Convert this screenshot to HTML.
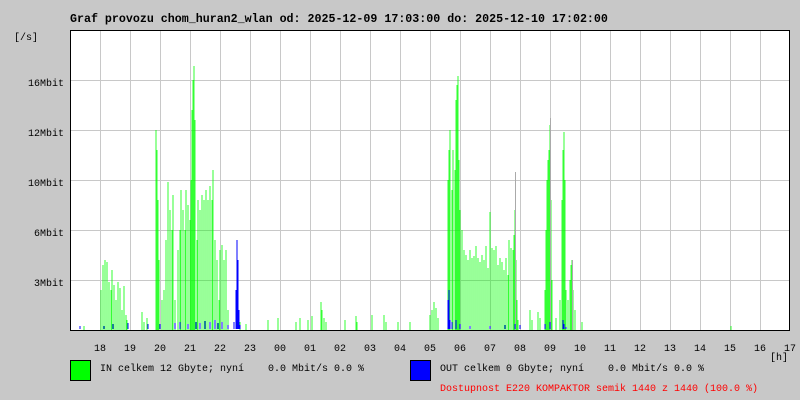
<!DOCTYPE html>
<html><head><style>
body{margin:0;background:#c8c8c8;width:800px;height:400px;overflow:hidden;font-family:"Liberation Mono","DejaVu Sans Mono",monospace;}
text{white-space:pre}
</style></head><body>
<svg width="800" height="400" xmlns="http://www.w3.org/2000/svg" xml:space="preserve" style="position:absolute;left:0;top:0" font-family="Liberation Mono, DejaVu Sans Mono, monospace" font-size="10">
<rect width="800" height="400" fill="#c8c8c8"/>
<rect x="70" y="30" width="720" height="300" fill="#fff"/>
<g stroke="#c8c8c8" stroke-width="1">
<path d="M100.5 30V330M130.5 30V330M160.5 30V330M190.5 30V330M220.5 30V330M250.5 30V330M280.5 30V330M310.5 30V330M340.5 30V330M370.5 30V330M400.5 30V330M430.5 30V330M460.5 30V330M490.5 30V330M520.5 30V330M550.5 30V330M580.5 30V330M610.5 30V330M640.5 30V330M670.5 30V330M700.5 30V330M730.5 30V330M760.5 30V330"/>
<path d="M70 80.5H790M70 130.5H790M70 180.5H790M70 230.5H790M70 280.5H790"/>
</g>
<g stroke="#00ff00" stroke-width="0.8" fill="none">
<path d="M101 330V290M103 330V265M105 330V260M107 330V262M109 330V282M111 330V290M112 330V270M114 330V285M116 330V300M118 330V282M120 330V288M122 330V310M124 330V286M126 330V315M127 330V320M84 330V326M142 330V312M144 330V322M147 330V318"/>
<path d="M156 330V130M157 330V150M158 330V200M159 330V260M162 330V300M164 330V290M166 330V240M168 330V182M170 330V210M172 330V230M173 330V195M175 330V300M178 330V250M180 330V230M181 330V190M183 330V210M185 330V230M186 330V190M188 330V205M190 330V220M191 330V180M192 330V110M193 330V80M194 330V66M195 330V120M197 330V240M198 330V200M200 330V210M202 330V195M204 330V200M206 330V190M208 330V200M210 330V186M212 330V200M213 330V170M215 330V240M217 330V260M219 330V300M220 330V250M222 330V245M224 330V260M226 330V250M228 330V310"/>
<path d="M240 330V322M246 330V324M268 330V320M278 330V318M296 330V322M300 330V318M308 330V320M312 330V316M321 330V302M322 330V310M324 330V318M326 330V322M345 330V320M356 330V316M357 330V322M372 330V315M384 330V315M386 330V322M398 330V322M410 330V322M430 330V315M432 330V310M434 330V302M436 330V308M438 330V318"/>
<path d="M448 330V180M449 330V150M450 330V130M452 330V190M453 330V150M455 330V170M456 330V100M457 330V85M458 330V76M459 330V160M460 330V210M462 330V230M464 330V250M466 330V255M468 330V260M470 330V250M472 330V258M474 330V256M476 330V246M478 330V258M480 330V262M482 330V255M484 330V260M486 330V246M488 330V268M490 330V212M492 330V248M494 330V250M496 330V246M498 330V265M500 330V258M502 330V262M504 330V270M506 330V258M508 330V275M509 330V240M511 330V248M513 330V250M514 330V235M515 330V210M516 330V260M517 330V300M518 330V320"/>
<path d="M530 330V310M532 330V320M538 330V312M540 330V318M545 330V290M546 330V230M547 330V180M548 330V160M549 330V150M550 330V125M551 330V200M552 330V280M556 330V318M560 330V300M562 330V200M563 330V150M564 330V132M565 330V180M566 330V290M568 330V300M570 330V280M571 330V265M572 330V260M573 330V290M575 330V310M582 330V322M731 330V326"/>
</g>
<g stroke="#aaa" stroke-width="1"><path d="M515.5 330V172M550.5 330V118M572.5 330V260"/></g>
<g stroke="#0000ff" stroke-width="1" fill="none">
<path d="M80 329V326M104 329V326M113 329V324M128 329V323M148 329V324M160 329V324M175 329V323M180 329V322M188 329V324M196 329V322M200 329V323M205 329V321M210 329V322M215 329V320M218 329V323M222 329V322M228 329V325M234 329V322M236 329V290M237 329V240M238 329V260M239 329V310M240 329V325"/>
<path d="M448 329V300M449 329V290M450 329V320M452 329V322M456 329V320M460 329V324M470 329V326M490 329V326M505 329V325M515 329V324M520 329V325M545 329V324M550 329V322M563 329V320M564 329V324M566 329V327"/>
</g>
<path d="M70.5 30V330.5H789.5V30.5H70.5" stroke="#000" stroke-width="1" fill="none"/>
<text x="70" y="22" font-weight="bold" font-size="11.65">Graf provozu chom_huran2_wlan od: 2025-12-09 17:03:00 do: 2025-12-10 17:02:00</text>
<text x="14" y="40">[/s]</text>
<g text-anchor="end"><text x="64" y="86">16Mbit</text><text x="64" y="136">12Mbit</text><text x="64" y="186">10Mbit</text><text x="64" y="236">6Mbit</text><text x="64" y="286">3Mbit</text></g>
<g text-anchor="middle">
<text x="100" y="351">18</text><text x="130" y="351">19</text><text x="160" y="351">20</text><text x="190" y="351">21</text><text x="220" y="351">22</text><text x="250" y="351">23</text><text x="280" y="351">00</text><text x="310" y="351">01</text><text x="340" y="351">02</text><text x="370" y="351">03</text><text x="400" y="351">04</text><text x="430" y="351">05</text><text x="460" y="351">06</text><text x="490" y="351">07</text><text x="520" y="351">08</text><text x="550" y="351">09</text><text x="580" y="351">10</text><text x="610" y="351">11</text><text x="640" y="351">12</text><text x="670" y="351">13</text><text x="700" y="351">14</text><text x="730" y="351">15</text><text x="760" y="351">16</text><text x="790" y="351">17</text>
</g>
<text x="770" y="360">[h]</text>
<rect x="70.5" y="360.5" width="20" height="20" fill="#00ff00" stroke="#000"/>
<text x="100" y="371">IN celkem 12 Gbyte; nyní    0.0 Mbit/s 0.0 %</text>
<rect x="410.5" y="360.5" width="20" height="20" fill="#0000ff" stroke="#000"/>
<text x="440" y="371">OUT celkem 0 Gbyte; nyní    0.0 Mbit/s 0.0 %</text>
<text x="440" y="391" fill="#ff0000">Dostupnost E220 KOMPAKTOR semik 1440 z 1440 (100.0 %)</text>
</svg>
</body></html>
